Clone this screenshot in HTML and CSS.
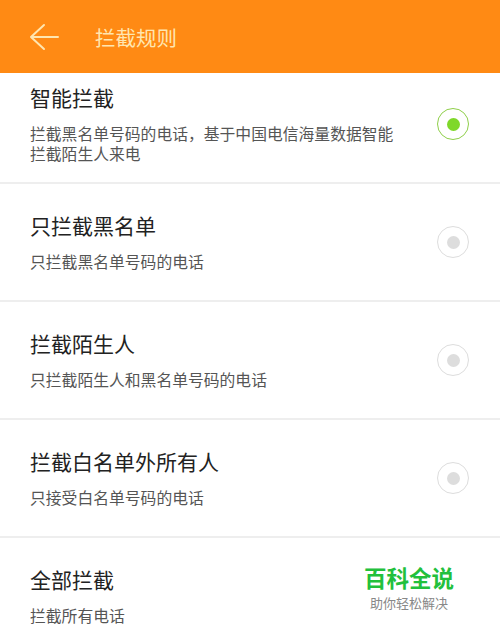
FILE: index.html
```html
<!DOCTYPE html>
<html lang="zh-CN">
<head>
  <meta charset="UTF-8" />
  <meta name="viewport" content="width=device-width, initial-scale=1" />
  <title>拦截规则</title>
  <link rel="stylesheet" href="styles.css">
</head>
<body>
  <header class="topbar">
    <svg class="back" width="32" height="28" viewBox="0 0 32 28">
      <path d="M30 14 H3 M16 2 L3 14 L16 26" fill="none" stroke="#ffe6b0" stroke-width="2" stroke-linecap="round" stroke-linejoin="round"/>
    </svg>
    <h1>拦截规则</h1>
  </header>

  <ul class="rules">
    <li class="rule rule-first">
      <div class="info">
        <div class="name">智能拦截</div>
        <div class="desc">拦截黑名单号码的电话，基于中国电信海量数据智能拦截陌生人来电</div>
      </div>
      <span class="radio checked"></span>
    </li>
    <li class="rule">
      <div class="info">
        <div class="name">只拦截黑名单</div>
        <div class="desc">只拦截黑名单号码的电话</div>
      </div>
      <span class="radio"></span>
    </li>
    <li class="rule">
      <div class="info">
        <div class="name">拦截陌生人</div>
        <div class="desc">只拦截陌生人和黑名单号码的电话</div>
      </div>
      <span class="radio"></span>
    </li>
    <li class="rule">
      <div class="info">
        <div class="name">拦截白名单外所有人</div>
        <div class="desc">只接受白名单号码的电话</div>
      </div>
      <span class="radio"></span>
    </li>
    <li class="rule">
      <div class="info">
        <div class="name">全部拦截</div>
        <div class="desc">拦截所有电话</div>
      </div>
    </li>
  </ul>

  <div class="watermark">
    <div class="wm-title">百科全说</div>
    <div class="wm-sub">助你轻松解决</div>
  </div>
</body>
</html>
```

FILE: styles.css
```css
html, body {
  height: 100%;
  margin: 0;
  padding: 0;
  font-family: "Noto Sans CJK SC", "Noto Sans", sans-serif;
}

body {
  background-color: #fff;
  overflow: hidden;
  position: relative;
}

.topbar {
  height: 73px;
  background-color: #ff8a14;
  display: flex;
  align-items: center;
}

.topbar .back {
  margin-left: 28px;
}

.topbar h1 {
  margin: 0 0 0 35px;
  font-size: 20.5px;
  font-weight: normal;
  color: #ffe6b0;
}

.rules {
  list-style: none;
  margin: 0;
  padding: 0;
}

.rule {
  display: flex;
  align-items: center;
  justify-content: space-between;
  padding: 28px 31px 28px 30px;
  border-bottom: 2px solid #eeeeee;
}

.rule-first {
  padding-top: 11px;
  padding-bottom: 18px;
}

.name {
  font-size: 21px;
  line-height: 27px;
  color: #222;
}

.desc {
  margin-top: 13px;
  max-width: 370px;
  font-size: 15.8px;
  line-height: 20px;
  color: #555;
}

.radio {
  width: 30px;
  height: 30px;
  border: 1.5px solid #dddddd;
  border-radius: 50%;
  display: flex;
  align-items: center;
  justify-content: center;
  flex-shrink: 0;
}

.radio::after {
  content: "";
  width: 13px;
  height: 13px;
  border-radius: 50%;
  background-color: #dddddd;
}

.radio.checked {
  border-color: #8fcf4a;
}

.radio.checked::after {
  background-color: #7fd82a;
}

.watermark {
  position: absolute;
  left: 364px;
  top: 561px;
  text-align: center;
}

.wm-title {
  font-size: 22.5px;
  font-weight: bold;
  color: #22c03c;
}

.wm-sub {
  font-size: 13px;
  color: #888;
}
```
